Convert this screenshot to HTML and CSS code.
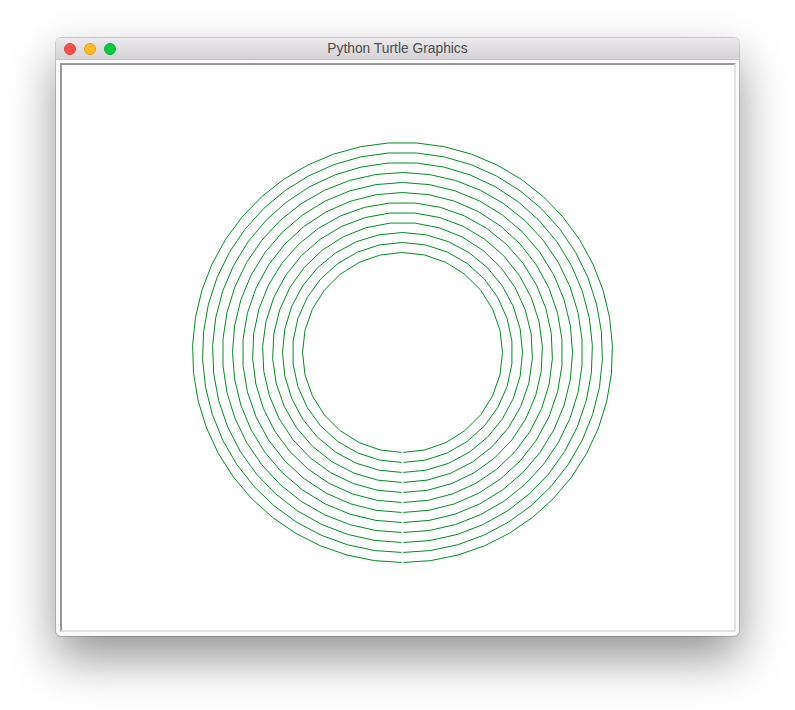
FILE: index.html
```html
<!DOCTYPE html>
<html>
<head>
<meta charset="utf-8">
<title>Python Turtle Graphics</title>
<link rel="stylesheet" href="styles.css">
</head>
<body>
<div class="desktop">
  <div class="window">
    <div class="titlebar">
      <div class="lights">
        <span class="light red"></span>
        <span class="light yellow"></span>
        <span class="light green"></span>
      </div>
      <div class="title">Python Turtle Graphics</div>
    </div>
    <div class="content">
      <div class="canvas">
        <svg id="drawing" class="drawing" width="672" height="565" viewBox="0 0 672 565" xmlns="http://www.w3.org/2000/svg"></svg>
      </div>
    </div>
  </div>
</div>
<script src="script.js"></script>
</body>
</html>
```

FILE: styles.css
```css
html, body {
  margin: 0;
  padding: 0;
  background: #ffffff;
}
body {
  font-family: "Liberation Sans", Arial, sans-serif;
}
.desktop {
  padding: 38px 56px 74px 56px;
}
.window {
  width: 683px;
  height: 598px;
  border-radius: 5px;
  background: #fafafa;
  box-shadow: 0 0 0 1px rgba(0, 0, 0, 0.16), 0 22px 48px rgba(0, 0, 0, 0.42);
  display: flex;
  flex-direction: column;
  overflow: hidden;
}
.titlebar {
  position: relative;
  height: 21px;
  border-bottom: 1px solid #c4c4c4;
  background: linear-gradient(to bottom, #ebe9eb, #d5d3d5);
  display: flex;
  align-items: center;
  justify-content: center;
}
.lights {
  position: absolute;
  left: 8px;
  top: 5px;
  display: flex;
  gap: 8px;
}
.light {
  width: 12px;
  height: 12px;
  border-radius: 50%;
  box-sizing: border-box;
}
.red { background: #fe4f4c; border: 1px solid #e3443f; }
.yellow { background: #ffbc22; border: 1px solid #e2a11c; }
.green { background: #00cd45; border: 1px solid #0eae2e; }
.title {
  font-size: 13.8px;
  color: #4d4d4d;
  line-height: 22px;
  padding-top: 1px;
}
.content {
  flex: 1;
  padding: 3px 3px 4px 4px;
  display: flex;
}
.canvas {
  flex: 1;
  border-style: solid;
  border-width: 2px;
  border-color: #9a9a9a #e2e2e2 #e2e2e2 #9a9a9a;
  background: #ffffff;
  display: flex;
}
.drawing {
  display: block;
}
.ring {
  fill: none;
  stroke: #008f22;
  stroke-width: 1;
}
```

FILE: script.js
```js
(function () {
  var svg = document.getElementById('drawing');
  var cx = 340.5, cy = 287.5;
  for (var r = 100; r <= 210; r += 10) {
    var steps = 1 + Math.floor(Math.min(11 + r / 6, 59));
    var w = 2 * Math.PI / steps;
    var pts = [];
    for (var k = 0; k <= steps; k++) {
      var a = k * w;
      var x = cx + r * Math.sin(a);
      var y = cy + r * Math.cos(a);
      pts.push([x, y]);
    }
    // leave a tiny break where the pen started, as the reference does
    var gap = 0.8;
    var p0 = pts[0], p1 = pts[1];
    var d = Math.hypot(p1[0] - p0[0], p1[1] - p0[1]);
    pts[0] = [p0[0] + (p1[0] - p0[0]) * gap / d, p0[1] + (p1[1] - p0[1]) * gap / d];
    var n = pts.length - 1, pe = pts[n], pb = pts[n - 1];
    d = Math.hypot(pe[0] - pb[0], pe[1] - pb[1]);
    pts[n] = [pe[0] - (pe[0] - pb[0]) * gap / d, pe[1] - (pe[1] - pb[1]) * gap / d];
    var pl = document.createElementNS('http://www.w3.org/2000/svg', 'polyline');
    pl.setAttribute('class', 'ring');
    pl.setAttribute('points', pts.map(function (p) {
      return p[0].toFixed(2) + ',' + p[1].toFixed(2);
    }).join(' '));
    svg.appendChild(pl);
  }
})();
```
